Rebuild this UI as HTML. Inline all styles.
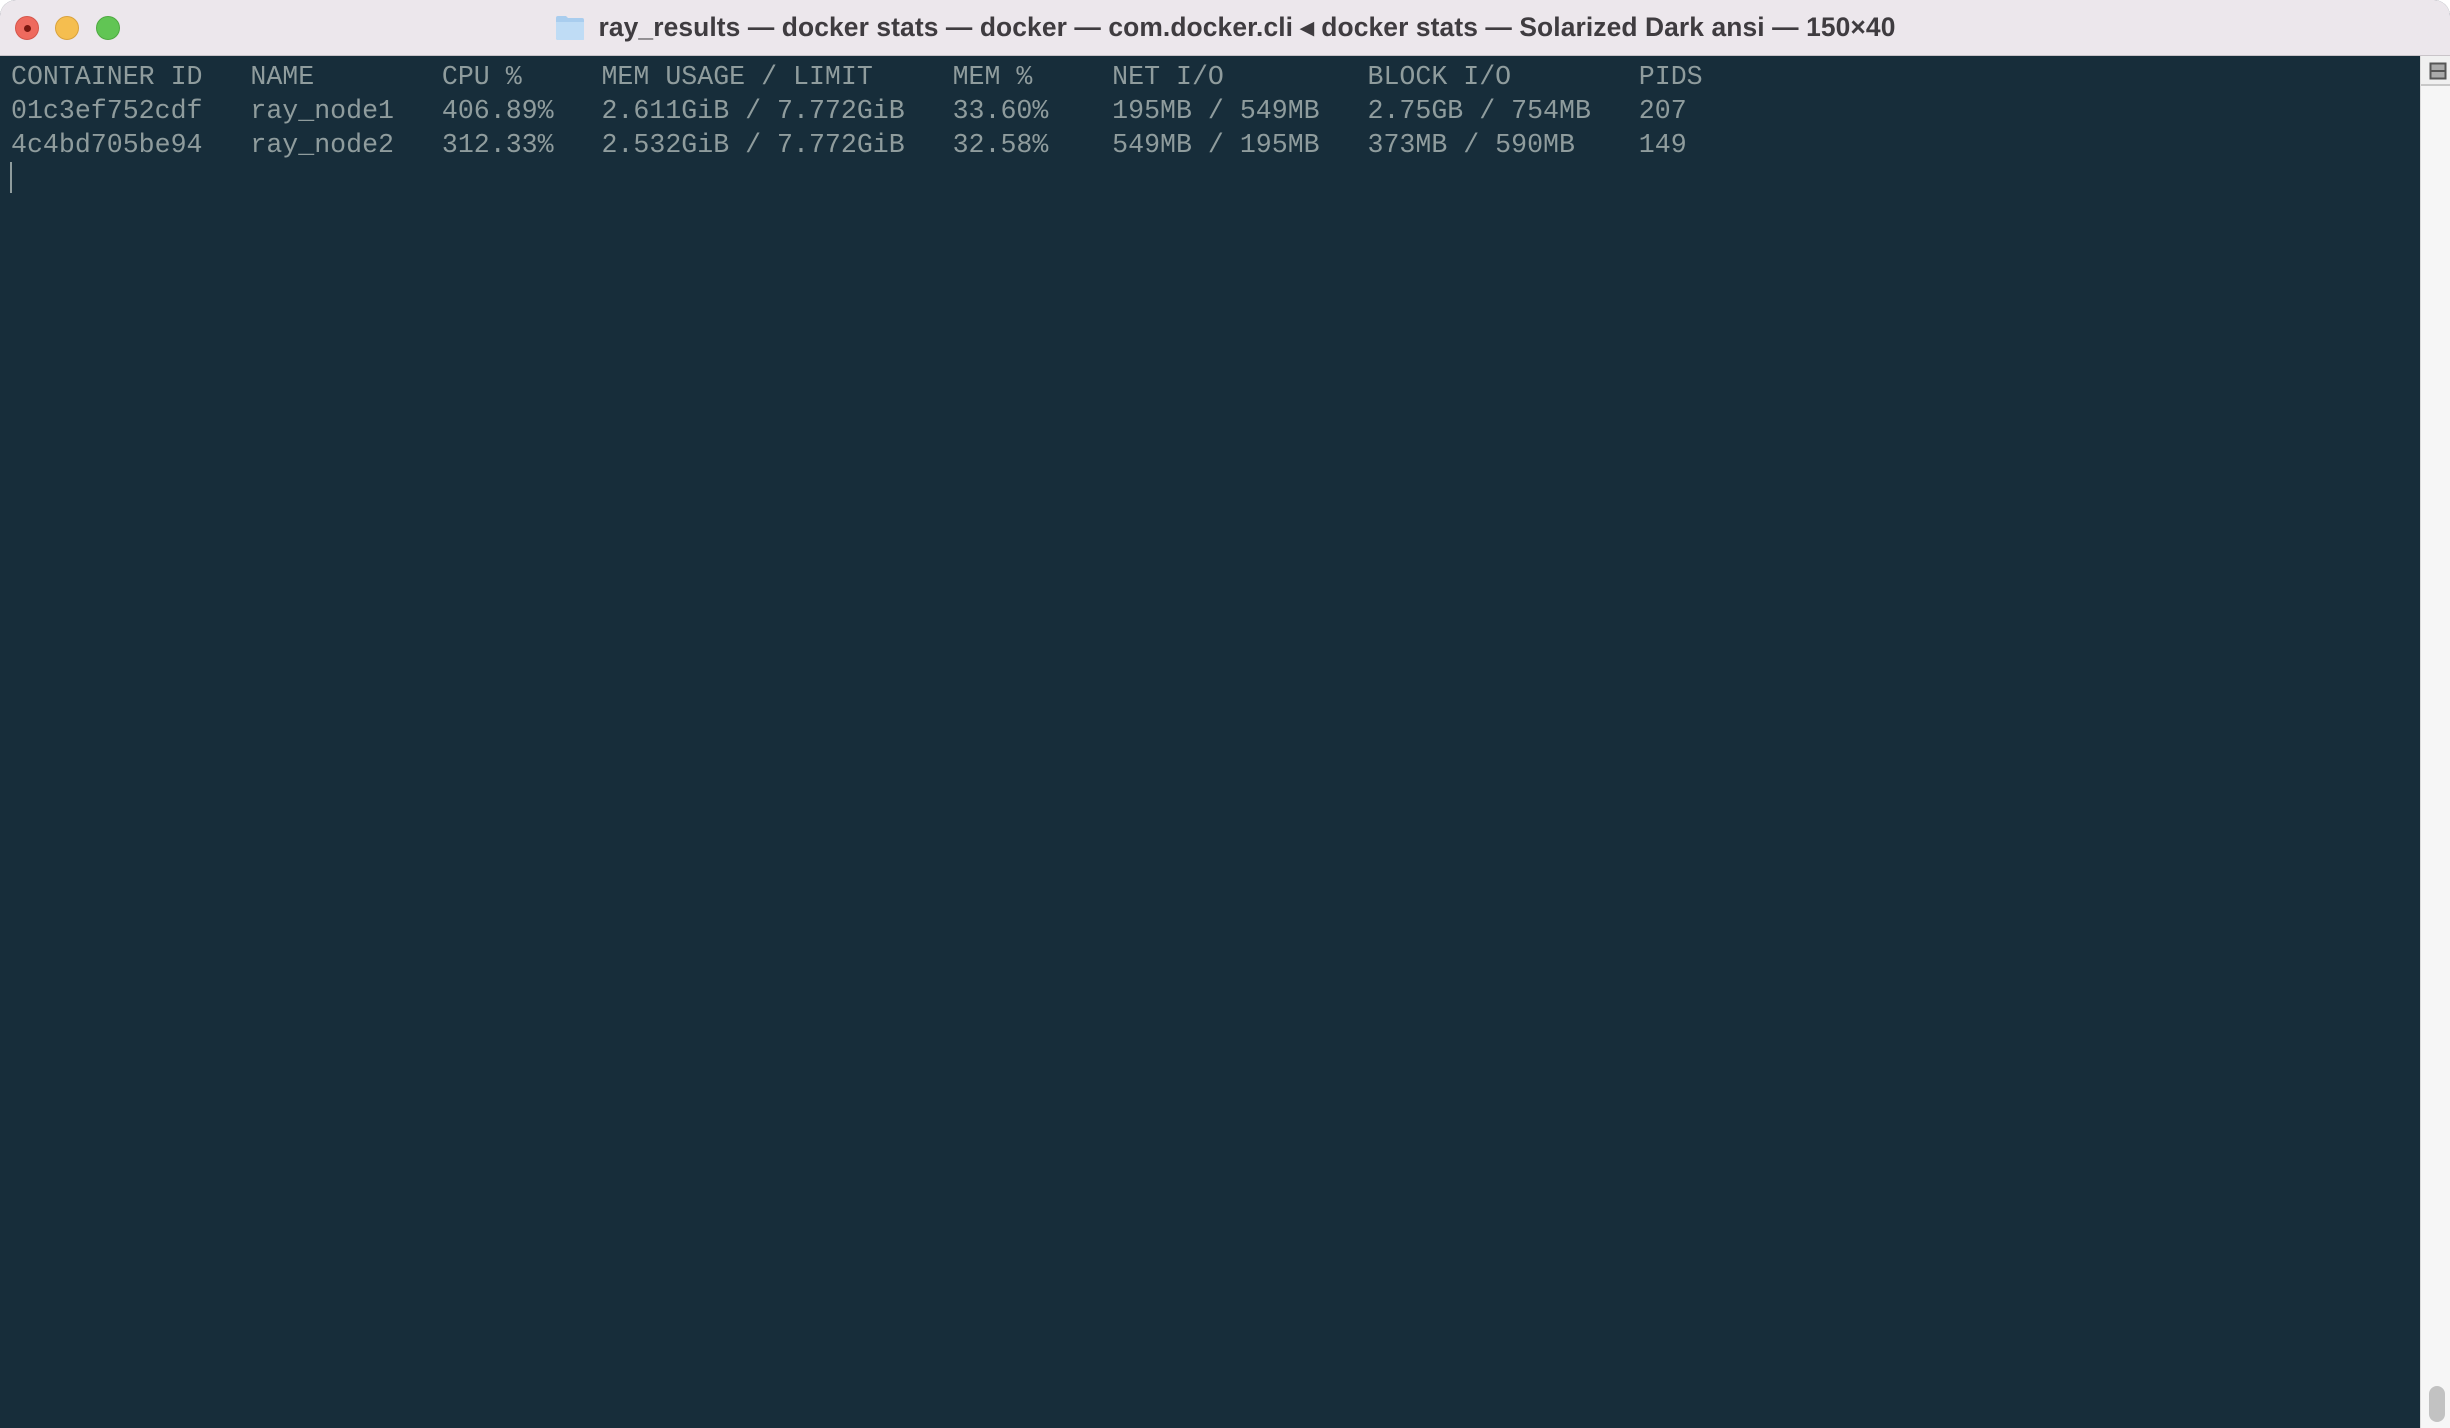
<!DOCTYPE html>
<html><head><meta charset="utf-8"><style>
*{margin:0;padding:0;box-sizing:border-box}
html,body{width:2450px;height:1428px;overflow:hidden;background:#ffffff}
.win{position:absolute;left:0;top:0;width:2450px;height:1428px;border-radius:16px 16px 0 0;overflow:hidden;background:#172d3a}
.title{position:absolute;left:0;top:0;width:2450px;height:56px;background:#ece7ec;border-bottom:1px solid #c9c4c9;display:flex;align-items:center;justify-content:center}
.title span{font-family:"Liberation Sans",sans-serif;font-weight:bold;font-size:26.4px;color:#3f3c40;margin-left:14px;letter-spacing:0.1px}
.dot{position:absolute;top:16px;width:24px;height:24px;border-radius:50%}
.term{position:absolute;left:0;top:56px;width:2420px;height:1372px;background:#172d3a}
pre{position:absolute;left:11px;top:4px;font-family:"Liberation Mono",monospace;font-size:26.6px;line-height:34px;color:#8f9c9d}
.cursor{position:absolute;left:10px;top:106px;width:2px;height:31px;background:#8f9c9d}
.sb{position:absolute;left:2420px;top:56px;width:30px;height:1372px;background:#f6f6f6;border-left:1px solid #dcdcdc}
.sbh{position:absolute;left:0;top:0;width:30px;height:30px;border-bottom:2px solid #c8c8c8;background:#f0f0f0}
.thumb{position:absolute;left:8px;top:1330px;width:16px;height:36px;border-radius:8px;background:#c2c2c2}
</style></head><body>
<div class="win">
<div class="title">
<div class="dot" style="left:15px;background:#ee6a5e;border:1px solid #d5564b"><div style="position:absolute;left:8px;top:8px;width:7px;height:7px;border-radius:50%;background:#7a1810"></div></div>
<div class="dot" style="left:55px;background:#f5be4f;border:1px solid #d9a23c"></div>
<div class="dot" style="left:96px;background:#61c554;border:1px solid #4ea941"></div>
<svg width="30" height="26" viewBox="0 0 30 26"><path d="M1 3 Q1 1 3 1 H11 L13 3 H27 Q29 3 29 5 V24 Q29 25 27 25 H3 Q1 25 1 23 Z" fill="#a9cdee"/><path d="M1 7 H29 V24 Q29 25 27 25 H3 Q1 25 1 23 Z" fill="#bfdcf5"/></svg>
<span>ray_results — docker stats — docker — com.docker.cli ◂ docker stats — Solarized Dark ansi — 150×40</span>
</div>
<div class="term">
<pre>CONTAINER ID   NAME        CPU %     MEM USAGE / LIMIT     MEM %     NET I/O         BLOCK I/O        PIDS
01c3ef752cdf   ray_node1   406.89%   2.611GiB / 7.772GiB   33.60%    195MB / 549MB   2.75GB / 754MB   207
4c4bd705be94   ray_node2   312.33%   2.532GiB / 7.772GiB   32.58%    549MB / 195MB   373MB / 590MB    149</pre>
<div class="cursor"></div>
</div>
<div class="sb"><div class="sbh"><svg width="30" height="30" viewBox="0 0 30 30"><rect x="9.5" y="7.5" width="15" height="15" fill="#aaa" stroke="#555" stroke-width="2"/><line x1="9.5" y1="15" x2="24.5" y2="15" stroke="#555" stroke-width="2"/></svg></div><div class="thumb"></div></div>
</div>
</body></html>
